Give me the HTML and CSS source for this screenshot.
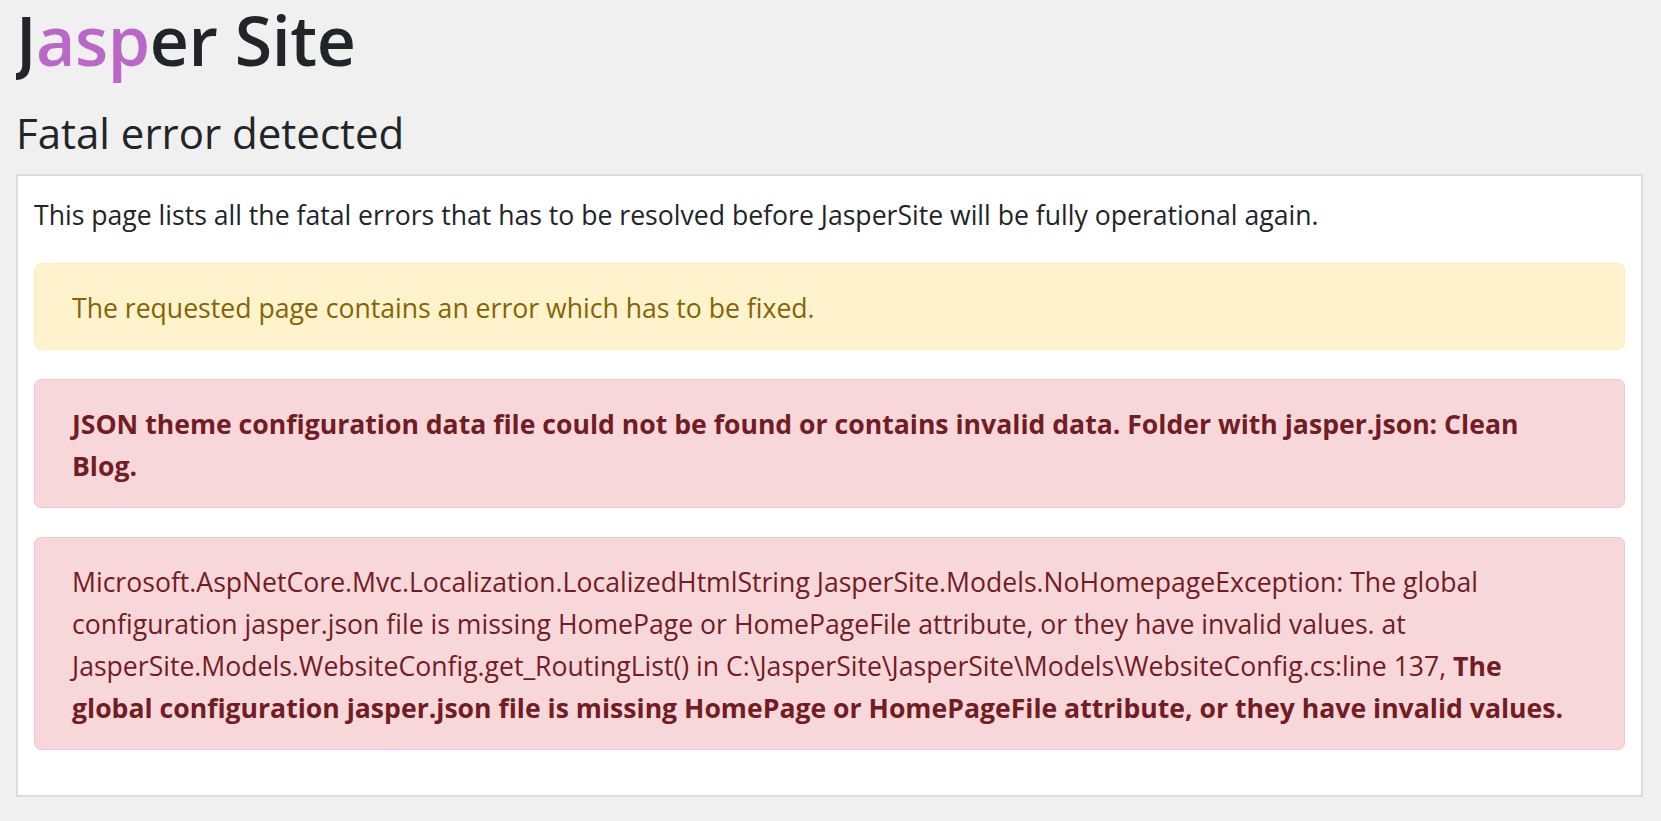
FILE: index.html
```html
<!DOCTYPE html>
<html lang="en">
<head>
<meta charset="utf-8">
<title>Jasper Site</title>
<link rel="stylesheet" href="styles.css">
</head>
<body>
<header class="site-header">
  <h1 class="site-title">J<span class="accent">asp</span>er Site</h1>
</header>
<main>
  <h2 class="page-title">Fatal error detected</h2>
  <section class="panel">
    <p class="intro">This page lists all the fatal errors that has to be resolved before JasperSite will be fully operational again.</p>
    <div class="alert alert-warning">The requested page contains an error which has to be fixed.</div>
    <div class="alert alert-danger"><strong>JSON theme configuration data file could not be found or contains invalid data. Folder with jasper.json: Clean Blog.</strong></div>
    <div class="alert alert-danger">Microsoft.AspNetCore.Mvc.Localization.LocalizedHtmlString JasperSite.Models.NoHomepageException: The global configuration jasper.json file is missing HomePage or HomePageFile attribute, or they have invalid values. at JasperSite.Models.WebsiteConfig.get_RoutingList() in C:\JasperSite\JasperSite\Models\WebsiteConfig.cs:line 137, <strong>The global configuration jasper.json file is missing HomePage or HomePageFile attribute, or they have invalid values.</strong></div>
  </section>
</main>
</body>
</html>
```
FILE: styles.css
```css
html {
  background: #f0f0f0;
}
body {
  margin: 0 18px 0 16px;
  font-family: "Open Sans", "Noto Sans", sans-serif;
  font-size: 26.6px;
  line-height: 42px;
  color: #212529;
  background: #f0f0f0;
}
.site-title {
  margin: 0;
  font-size: 68px;
  line-height: 80px;
  font-weight: 600;
  letter-spacing: -0.4px;
  color: #212529;
}
.accent {
  color: #ba68c8;
}
.page-title {
  margin: 28px 0 16px;
  font-size: 42px;
  line-height: 50px;
  font-weight: 400;
}
.panel {
  background: #fff;
  border: 2px solid #dcdcdc;
  padding: 16px;
}
.intro {
  margin: 0 0 27px;
  padding-top: 2px;
}
.alert {
  border: 1px solid transparent;
  border-radius: 7px;
  padding: 23px 38px 20px 37px;
  margin-bottom: 29px;
}
.alert-warning {
  color: #856404;
  background: #fff3cd;
  border-color: #ffeeba;
}
.alert-danger {
  color: #721c24;
  background: #f8d7da;
  border-color: #f5c6cb;
}
.alert strong {
  font-weight: 700;
}
```
